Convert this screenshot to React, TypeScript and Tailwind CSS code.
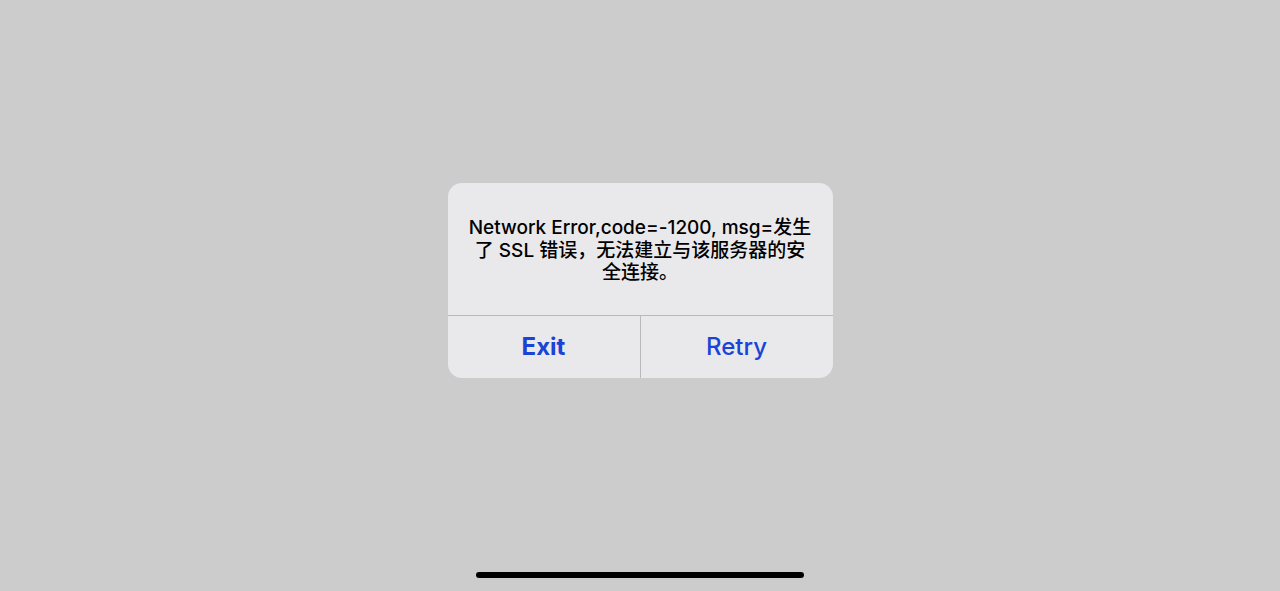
export default function App() {
  const font = { fontFamily: 'Inter, "Noto Sans CJK SC", sans-serif' };
  return (
    <div className="w-full h-[591px] bg-[#cccccc] flex flex-col items-center" style={font}>
      <div className="mt-[183px] w-[385px] rounded-[14px] bg-[#e9e9eb] overflow-hidden">
        <div className="px-[18px] pt-[34px] pb-[30px] text-center text-[19px] leading-[22.5px] font-medium text-black">
          Network Error,code=-1200, msg=发生了 SSL 错误，无法建立与该服务器的安全连接。
        </div>
        <div className="flex h-[63px] border-t border-[#b9b9bc]">
          <button className="flex-1 flex items-center justify-center text-[24px] font-bold text-[#1b43d6]">
            Exit
          </button>
          <div className="w-px bg-[#b9b9bc]" />
          <button className="flex-1 flex items-center justify-center text-[24px] font-medium text-[#1b43d6]">
            Retry
          </button>
        </div>
      </div>
      <div className="mt-auto mb-[13px] w-[328px] h-[6px] rounded-full bg-black" />
    </div>
  );
}
